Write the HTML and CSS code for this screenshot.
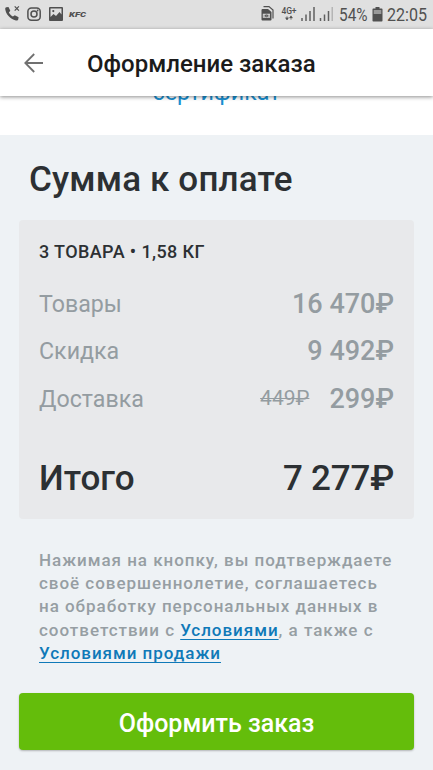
FILE: index.html
```html
<!DOCTYPE html>
<html lang="ru">
<head>
<meta charset="utf-8">
<title>Оформление заказа</title>
<link rel="stylesheet" href="styles.css">
</head>
<body>
<div class="statusbar">
  <svg class="status-icons" width="90" height="29" viewBox="0 0 90 29">
    <path d="M6.400 7.200l2.100-.3 1.800 3.800-1.400 1.800c1 1.800 2.100 2.900 4 4l1.900-1.300 3.800 2.100-.4 2.200c-.3 1-1.200 1.300-2.300 1C10 19 5.700 14 5.200 9c0-1 .3-1.600 1.200-1.800z" fill="#505050"/>
    <path d="M14.700 6.400l4.200 4.200M18.900 6.400l-4.200 4.200" stroke="#505050" stroke-width="1.200"/>
    <g fill="none" stroke="#505050" stroke-width="1.500"><rect x="27.900" y="7.900" width="12.300" height="12.300" rx="3.500"/><circle cx="34" cy="14" r="3"/></g>
    <circle cx="37.600" cy="10.500" r=".9" fill="#505050"/>
    <path fill-rule="evenodd" d="M50 7h12q1 0 1 1v12q0 1-1 1H50q-1 0-1-1V8q0-1 1-1zM50.500 8.500v8.500l3-3 2.500 2 3.500-4 2 2.500V8.500zM53.300 10a1.100 1.100 0 1 1 0 2.200 1.100 1.100 0 0 1 0-2.200z" fill="#505050"/>
    <text class="kfc" x="69" y="16.800" textLength="17" lengthAdjust="spacingAndGlyphs">KFC</text>
  </svg>
  <svg class="status-icons" width="172" height="29" viewBox="261 0 172 29">
    <path d="M263.500 6.600h5.500l4 3.500v8.400" fill="none" stroke="#505050" stroke-width="1.200"/>
    <path fill-rule="evenodd" d="M262.500 9h5.500l3.500 3v7.500q0 1-1 1h-8q-1 0-1-1V10q0-1 1-1zM262.800 13.800v4h7.200v-4z" fill="#505050"/>
    <path d="M264 14.500v2.600M269 14.500v2.600M264.700 15.800l1.500-1.300v2.600zM268.300 15.800l-1.500-1.300v2.600z" fill="#505050" stroke="#505050" stroke-width=".5"/>
    <text class="net" x="281.500" y="14" textLength="15">4G+</text>
    <path d="M287 16v4M285.500 17.800h3l-1.500 2.200zM291 16v4M289.500 18h3l-1.500-2.200z" fill="#505050" stroke="#505050" stroke-width=".5"/>
    <path d="M302 18v3M306 14.500V21M310 11v10M314 7v14M320.500 18v3M324.500 14.500V21M328.500 11v10" stroke="#606060" stroke-width="1.500"/>
    <path d="M332.200 7v14" stroke="#aaa" stroke-width="1.200"/>
    <text class="digits" x="339" y="21" textLength="28.500" lengthAdjust="spacingAndGlyphs">54%</text>
    <path d="M375.500 7h4v1.500h2.200q.8 0 .8.800v11.400q0 .8-.8.800h-8.400q-.8 0-.8-.8V9.300q0-.8.8-.8h2.200z" fill="#505050"/>
    <path d="M373.700 10h7.600v4h-7.600z" fill="#999"/>
    <text class="digits" x="387" y="21" textLength="40" lengthAdjust="spacingAndGlyphs">22:05</text>
  </svg>
</div>
<header class="appbar">
  <svg class="back" width="20" height="20" viewBox="0 0 20 20"><path d="M19 10H1.500M10.200 1L1.300 10l8.900 9" fill="none" stroke="#707070" stroke-width="1.800"/></svg>
  <h1 class="appbar-title">Оформление заказа</h1>
</header>
<div class="certificate"><a class="certificate-link">сертификат</a></div>
<main class="checkout">
  <h2 class="heading">Сумма к оплате</h2>
  <section class="summary">
    <p class="count">3 ТОВАРА • 1,58 КГ</p>
    <div class="row"><span class="label">Товары</span><span class="price">16 470₽</span></div>
    <div class="row"><span class="label">Скидка</span><span class="price">9 492₽</span></div>
    <div class="row"><span class="label">Доставка</span><span class="old-price">449₽</span><span class="price">299₽</span></div>
    <div class="total"><span class="total-label">Итого</span><span class="total-price">7 277₽</span></div>
  </section>
  <p class="legal">Нажимая на кнопку, вы подтверждаете<br>своё совершеннолетие, соглашаетесь<br>на обработку персональных данных в<br>соответствии с <a class="link">Условиями</a>, а также с<br><a class="link">Условиями продажи</a></p>
  <button class="submit">Оформить заказ</button>
</main>
</body>
</html>
```
FILE: styles.css
```css
* { box-sizing: border-box; }
body { margin: 0; height: 770px; overflow: hidden; display: flex; flex-direction: column; background: #eef2f5; font-family: Roboto, "Liberation Sans", sans-serif; color: #2c3033; }
h1, h2, p { margin: 0; }
.statusbar { height: 29px; flex: none; display: flex; align-items: center; justify-content: space-between; background: #e0e0e0; }
.status-icons { flex: none; display: block; }
.kfc { font: italic 900 8px Roboto, sans-serif; fill: #505050; }
.net { font: 500 8.5px Roboto, sans-serif; fill: #505050; }
.digits { font: 400 19px Roboto, sans-serif; fill: #505050; }
.appbar { height: 67px; flex: none; display: flex; align-items: center; background: #fff; padding-left: 24px; position: relative; z-index: 1; box-shadow: 0 1px 4px rgba(0, 0, 0, .45); }
.back { flex: none; }
.appbar-title { margin: 2px 0 0 43px; font-size: 24px; line-height: 28px; font-weight: 500; color: #1b1b1b; white-space: nowrap; }
.certificate { height: 39px; flex: none; background: #fff; text-align: center; }
.certificate-link { display: block; margin-top: -18px; font-size: 23.3px; line-height: 28px; color: #1a8fd0; }
.checkout { flex: 1; padding: 0 19px; }
.heading { height: 85px; padding: 25px 0 0 10px; font-size: 35px; line-height: 40px; font-weight: 500; letter-spacing: .15px; white-space: nowrap; }
.summary { height: 299px; padding: 21px 20px 0; background: #e8e9eb; border-radius: 4px; white-space: nowrap; }
.count { font-size: 18px; line-height: 22px; font-weight: 500; letter-spacing: .4px; margin-bottom: 18px; }
.row { height: 47.3px; display: flex; align-items: center; line-height: 47px; color: #949ca1; }
.label { margin-right: auto; font-size: 23.2px; }
.price { font-size: 27px; font-weight: 500; }
.old-price { margin-right: 20px; padding-bottom: 2px; font-size: 21px; text-decoration: line-through; text-decoration-thickness: 1px; }
.total { margin-top: 33px; display: flex; justify-content: space-between; align-items: baseline; font-size: 35px; line-height: 46px; font-weight: 500; }
.total-price { letter-spacing: -.2px; }
.legal { margin: 30px 0 0 20px; font-size: 17px; line-height: 23.2px; font-weight: 500; letter-spacing: .97px; color: #969ea3; white-space: nowrap; }
.link { color: #0f79b8; text-decoration: underline; text-decoration-thickness: 1px; text-underline-offset: 3px; text-decoration-skip-ink: none; }
.submit { display: block; width: 100%; height: 57px; margin-top: 28px; padding: 4px 0 0; border: 0; border-radius: 4px; background: #64bd0b; color: #fff; font: 500 25px/28px Roboto, sans-serif; box-shadow: 0 1px 2px rgba(0, 0, 0, .25); }
```
